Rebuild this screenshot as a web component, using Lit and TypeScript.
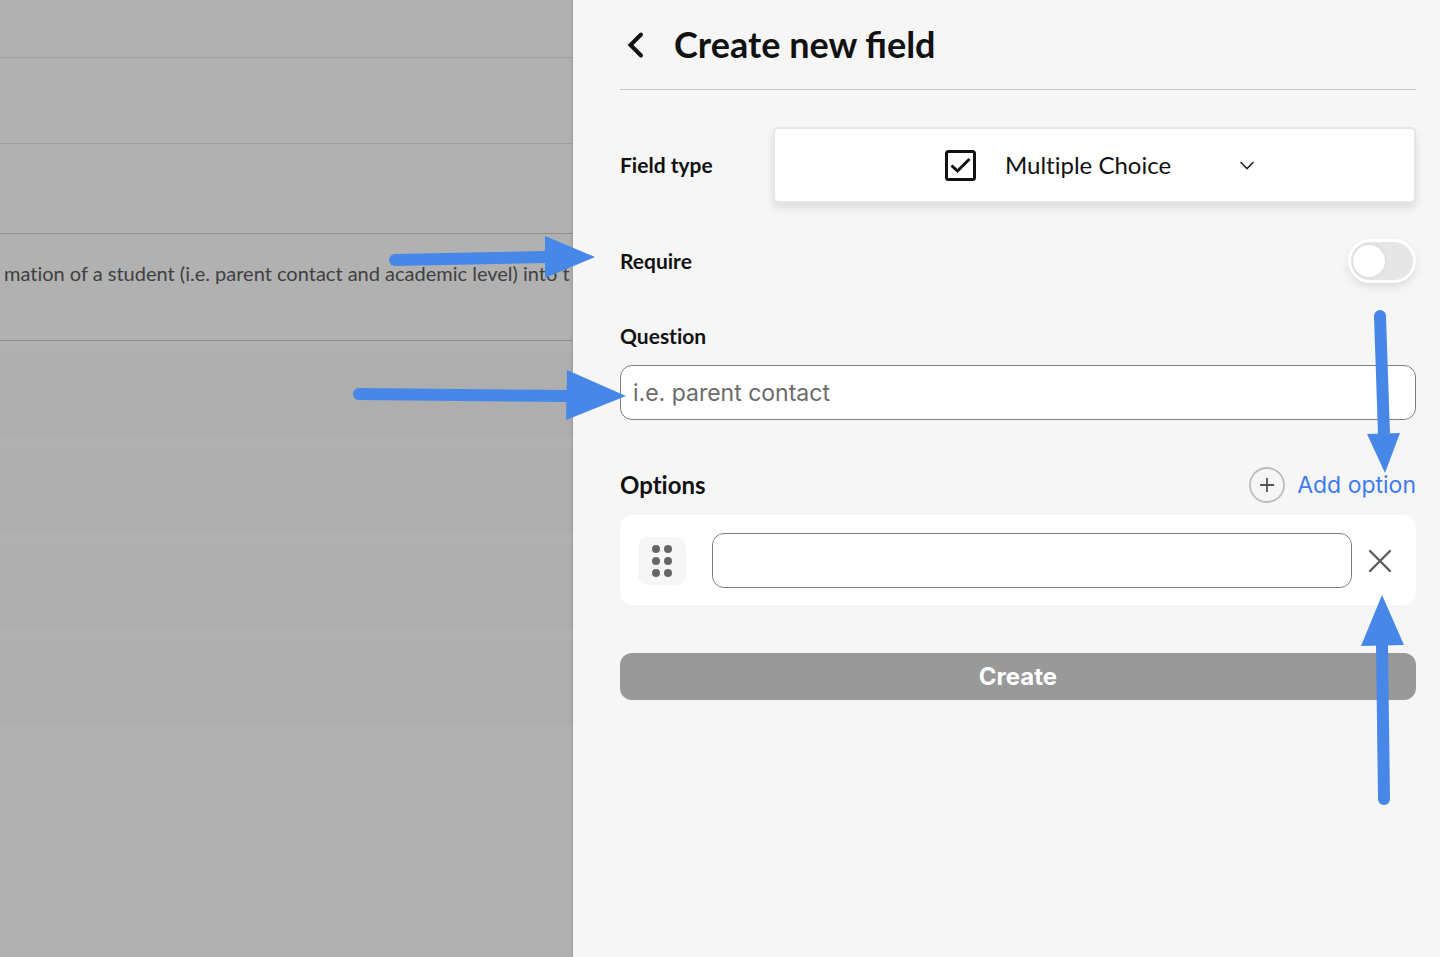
import { LitElement, html, css, svg } from "lit";
import { customElement, state } from "lit/decorators.js";

interface Arrow {
  shaft: [number, number, number, number];
  head: string;
}

const ARROWS: Arrow[] = [
  { shaft: [395, 260, 546, 257], head: "545,236 595,257 545,278" },
  { shaft: [359, 394, 568, 396], head: "567,370 626,396 566,420" },
  { shaft: [1380, 316, 1384, 434], head: "1367,434 1400,433 1385,473" },
  { shaft: [1384, 799, 1382, 645], head: "1361,646 1404,645 1382,595" },
];

@customElement("app-root")
export class AppRoot extends LitElement {
  static styles = css`
    :host {
      display: block;
      position: relative;
      font-family: Lato, "Liberation Sans", sans-serif;
      font-variant-ligatures: no-common-ligatures;
      color: #111;
    }
    *, *::before, *::after { box-sizing: border-box; }
    button, input, select { font: inherit; color: inherit; margin: 0; }
    button { border: 0; padding: 0; background: none; cursor: pointer; }
    svg { display: block; flex: none; }

    .layout {
      display: grid;
      grid-template-columns: minmax(0, 573fr) minmax(0, 867fr);
      min-height: 100vh;
    }

    .page { background: #b1b1b1; overflow: hidden; }
    .row { border-bottom: 1px solid #a0a0a0; }
    .row-first { height: 58px; }
    .row-second { height: 86px; }
    .row-third { height: 90px; border-color: #8e8e8e; }
    .intro {
      height: 107px;
      margin: 0;
      padding: 26px 0 0 4px;
      border-bottom: 1px solid #8e8e8e;
      font-size: 20px;
      line-height: 26px;
      color: #404040;
      white-space: nowrap;
      overflow: hidden;
    }
    .cards {
      display: grid;
      gap: 12px;
      padding-top: 12px;
    }
    .card { height: 84px; background: #aeaeae; }

    .panel {
      background: #f6f6f6;
      padding: 0 24px 24px 47px;
      box-shadow: 0 0 4px rgba(0, 0, 0, 0.2);
    }
    .head {
      display: flex;
      align-items: center;
      gap: 24px;
      height: 90px;
      border-bottom: 1px solid #c4c4c4;
    }
    .back { width: 30px; height: 30px; }
    .title {
      margin: 0;
      padding-bottom: 2px;
      font-size: 36px;
      line-height: 44px;
      font-weight: 700;
      font-variant-ligatures: normal;
    }

    .line { display: flex; align-items: center; justify-content: space-between; }
    .type { margin-top: 37px; gap: 24px; }
    .label { font-size: 21px; line-height: 26px; font-weight: 700; }
    .picker {
      flex: 0 0 643px;
      max-width: 81%;
      display: flex;
      align-items: center;
      justify-content: center;
      height: 76px;
      padding-left: 10px;
      border: 2px solid #e6e6e6;
      border-radius: 5px;
      background: #fff;
      box-shadow: 0 5px 8px rgba(0, 0, 0, 0.1);
    }
    .select {
      appearance: none;
      border: 0;
      padding: 0;
      margin: 0 68px 0 29px;
      background: none;
      font-size: 24px;
      line-height: 32px;
    }
    .require { margin-top: 36px; }
    .switch {
      appearance: none;
      display: flex;
      align-items: center;
      width: 68px;
      height: 44px;
      padding: 2px;
      border: 3px solid #fff;
      border-radius: 22px;
      background: #e6e6e6;
      box-shadow: 0 4px 8px rgba(0, 0, 0, 0.1);
      cursor: pointer;
    }
    .switch::before {
      content: "";
      width: 32px;
      height: 32px;
      border-radius: 50%;
      background: #fff;
      box-shadow: 0 0 4px rgba(0, 0, 0, 0.08);
    }
    .switch:checked { background: #4787e8; justify-content: flex-end; }
    .question { display: block; margin-top: 40px; margin-bottom: 16px; }
    .text {
      display: block;
      width: 100%;
      height: 55px;
      padding: 1px 12px 0;
      border: 1px solid #808080;
      border-radius: 12px;
      background: #fff;
      font-family: Inter, "Noto Sans", sans-serif;
      font-size: 23px;
    }
    .text::placeholder { color: #6b6b6b; opacity: 1; }
    .options { margin-top: 47px; }
    .subtitle { margin: 0; font-size: 24px; line-height: 30px; font-weight: 700; }
    .add {
      display: flex;
      align-items: center;
      gap: 12px;
      font-family: Inter, "Noto Sans", sans-serif;
      font-size: 23px;
      line-height: 30px;
      color: #3f7bf0;
    }
    .option {
      display: flex;
      align-items: center;
      margin-top: 12px;
      padding: 18px 18px 17px;
      border-radius: 12px;
      background: #fff;
    }
    .grip {
      display: grid;
      place-items: center;
      flex: none;
      width: 48px;
      height: 48px;
      margin-right: 26px;
      border-radius: 10px;
      background: #f6f6f6;
    }
    .remove { margin-left: 12px; }
    .create {
      display: block;
      width: 100%;
      height: 47px;
      margin-top: 48px;
      border-radius: 12px;
      background: #999;
      color: #fff;
      font-family: Inter, "Noto Sans", sans-serif;
      font-size: 24px;
      line-height: 30px;
      font-weight: 700;
    }

    .arrows {
      position: absolute;
      top: 0;
      left: 0;
      width: 100%;
      pointer-events: none;
    }
  `;

  @state() private required = false;

  render() {
    return html`
      <div class="layout">
        <section class="page">
          <div class="row row-first"></div>
          <div class="row row-second"></div>
          <div class="row row-third"></div>
          <p class="intro">mation of a student (i.e. parent contact and academic level) into t</p>
          <div class="cards">
            ${[0, 1, 2, 3].map(() => html`<div class="card"></div>`)}
          </div>
        </section>

        <main class="panel">
          <header class="head">
            <button class="back" aria-label="Back">
              <svg width="30" height="30" viewBox="0 0 30 30" fill="none" stroke="#111" stroke-width="4" stroke-linecap="round" stroke-linejoin="miter">
                <path d="M21 4.500L10.500 15L21 25.500" />
              </svg>
            </button>
            <h1 class="title">Create new field</h1>
          </header>

          <div class="line type">
            <label class="label" for="type">Field type</label>
            <div class="picker">
              <svg width="31" height="31" viewBox="0 0 31 31" fill="none" stroke="#111" stroke-width="3">
                <rect x="1.500" y="1.500" width="28" height="28" rx="2" />
                <path d="M6.500 15.500L12.500 21L24.500 9" stroke-width="3" />
              </svg>
              <select class="select" id="type">
                <option>Multiple Choice</option>
              </select>
              <svg width="14" height="10" viewBox="0 0 14 10" fill="none" stroke="#222" stroke-width="1.600" stroke-linecap="round">
                <path d="M1 2.500L7 8.500L13 2.500" />
              </svg>
            </div>
          </div>

          <div class="line require">
            <label class="label" for="require">Require</label>
            <input class="switch" id="require" type="checkbox" role="switch"
              .checked=${this.required}
              @change=${(e: Event) => (this.required = (e.target as HTMLInputElement).checked)} />
          </div>

          <label class="label question" for="question">Question</label>
          <input class="text" id="question" type="text" placeholder="i.e. parent contact" />

          <div class="line options">
            <h2 class="subtitle">Options</h2>
            <button class="add">
              <svg width="36" height="36" viewBox="0 0 36 36" fill="none">
                <circle cx="18" cy="18" r="17" stroke="#bdbdbd" stroke-width="1.800" />
                <path d="M11 18H25M18 11V25" stroke="#555" stroke-width="1.800" />
              </svg>
              <span>Add option</span>
            </button>
          </div>

          <div class="option">
            <button class="grip" aria-label="Reorder option">
              <svg width="20" height="32" viewBox="0 0 20 32" fill="#666">
                ${[4, 16, 28].map((y) => svg`<circle cx="4" cy=${y} r="4" /><circle cx="16" cy=${y} r="4" />`)}
              </svg>
            </button>
            <input class="text" type="text" aria-label="Option 1" />
            <button class="remove" aria-label="Remove option">
              <svg width="34" height="34" viewBox="0 0 34 34" fill="none" stroke="#5c5c5c" stroke-width="2.400" stroke-linecap="round">
                <path d="M6 7L26 27M26 7L6 27" />
              </svg>
            </button>
          </div>

          <button class="create">Create</button>
        </main>
      </div>

      <svg class="arrows" viewBox="0 0 1440 957" aria-hidden="true">
        ${ARROWS.map(
          ({ shaft: [x1, y1, x2, y2], head }) => svg`
            <circle cx=${x1} cy=${y1} r="6" fill="#4787e8" />
            <line x1=${x1} y1=${y1} x2=${x2} y2=${y2} stroke="#4787e8" stroke-width="12" />
            <polygon points=${head} fill="#4787e8" />`
        )}
      </svg>
    `;
  }
}
